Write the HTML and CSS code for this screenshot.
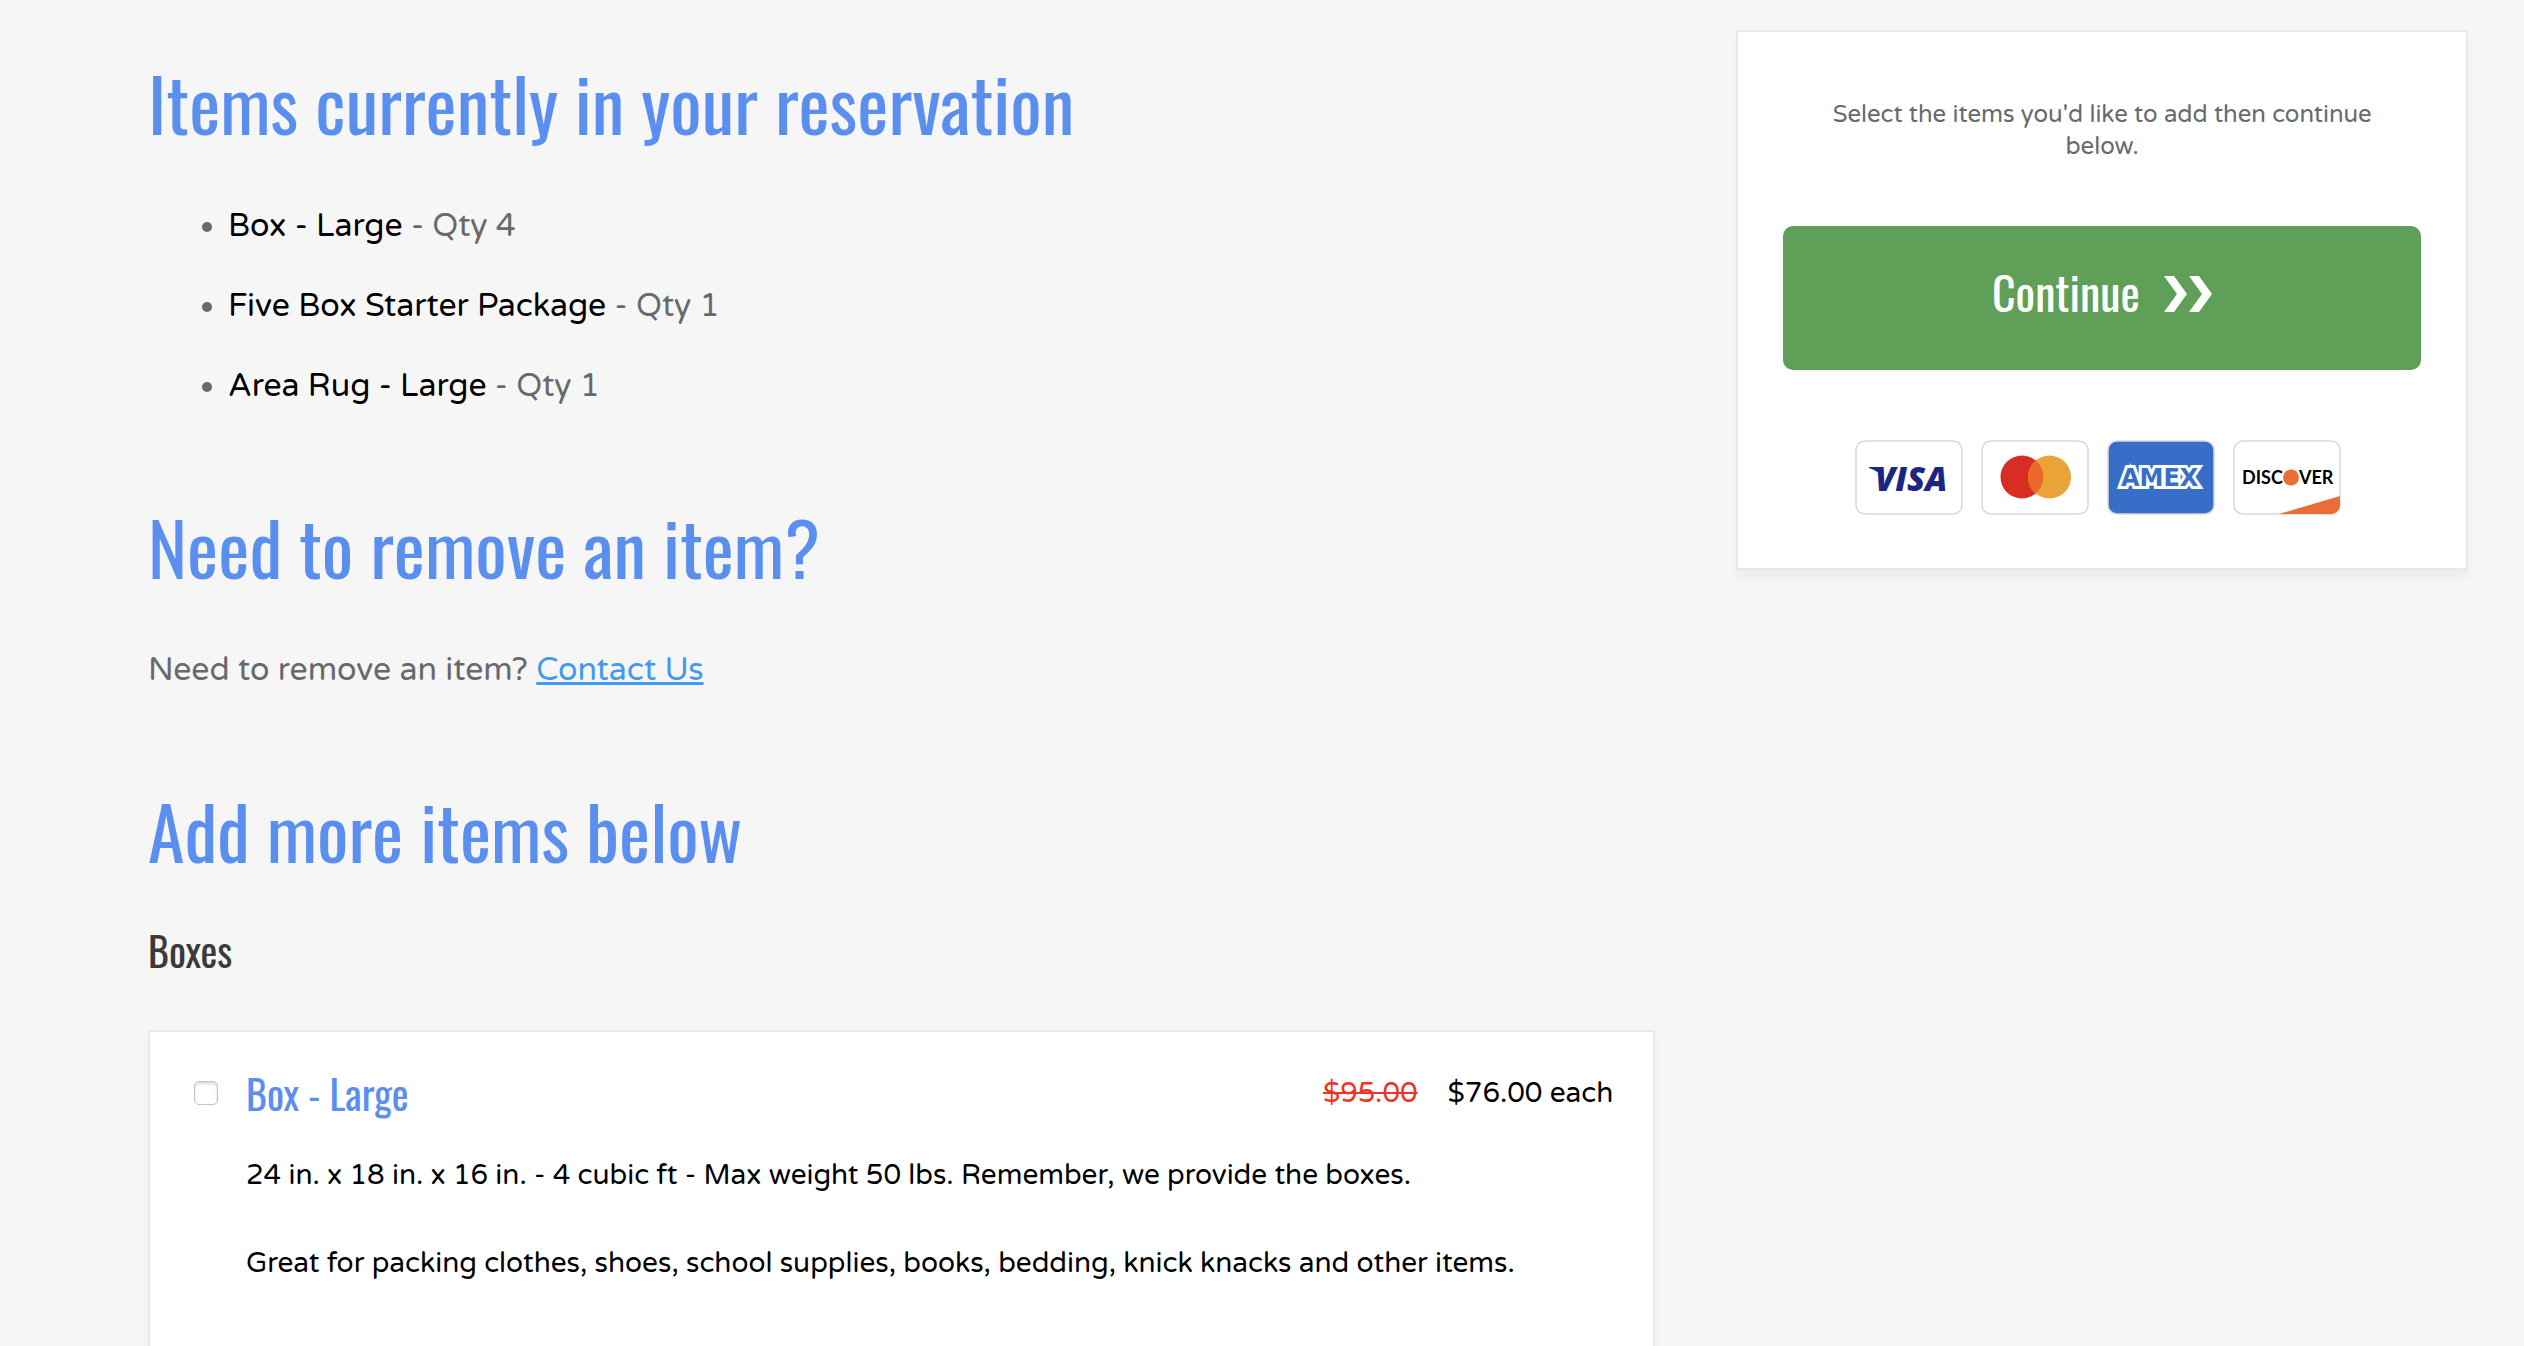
FILE: index.html
```html
<!DOCTYPE html>
<html lang="en">
<head>
    <meta charset="UTF-8">
    <meta name="viewport" content="width=device-width, initial-scale=1.0">
    <title>Your Reservation - Add Items</title>
    <link rel="stylesheet" href="styles.css">
</head>
<body>
    <form class="page">
        <main class="content">
            <h2>Items currently in your reservation</h2>
            <ul class="item-list">
                <li><span class="item-name">Box - Large</span> - Qty 4</li>
                <li><span class="item-name">Five Box Starter Package</span> - Qty 1</li>
                <li><span class="item-name">Area Rug - Large</span> - Qty 1</li>
            </ul>

            <h2>Need to remove an item?</h2>
            <p class="remove-note">Need to remove an item? <a href="#contact">Contact Us</a></p>

            <h2>Add more items below</h2>
            <h3>Boxes</h3>

            <div class="product">
                <div class="product-header">
                    <input type="checkbox" id="box-large" name="items">
                    <label for="box-large">Box - Large</label>
                    <span class="old-price">$95.00</span>
                    <span class="price">$76.00 each</span>
                </div>
                <div class="product-description">
                    <p>24 in. x 18 in. x 16 in. - 4 cubic ft - Max weight 50 lbs. Remember, we provide the boxes.</p>
                    <p>Great for packing clothes, shoes, school supplies, books, bedding, knick knacks and other items.</p>
                </div>
            </div>
        </main>

        <aside class="sidebar">
            <p class="sidebar-text">Select the items you'd like to add then continue below.</p>
            <button type="button" class="continue-button">
                Continue
                <svg class="chevrons" viewBox="0 0 48 36" aria-hidden="true">
                    <path d="M0 0h10l13 18-13 18H0l13-18zM25 0h10l13 18-13 18H25l13-18z" fill="#fff"/>
                </svg>
            </button>
            <div class="cards">
                <!-- Visa -->
                <svg class="card" viewBox="0 0 108 75">
                    <rect x="1" y="1" width="106" height="73" rx="9" fill="#fff" stroke="#d9d9d9" stroke-width="1.5"/>
                    <path d="M14 27h8q4 0 5 4l2 9q-4-9-15-12z" fill="#1a2780"/>
                    <text x="20" y="51" class="visa-text">VISA</text>
                </svg>
                <!-- Mastercard -->
                <svg class="card" viewBox="0 0 108 75">
                    <rect x="1" y="1" width="106" height="73" rx="9" fill="#fff" stroke="#d9d9d9" stroke-width="1.5"/>
                    <circle cx="41" cy="37" r="21.5" fill="#d82d22"/>
                    <circle cx="68.5" cy="37" r="21.5" fill="#eaa338"/>
                    <path d="M54.75 20.5a21.5 21.5 0 0 1 0 33 21.5 21.5 0 0 1 0-33z" fill="#ea682a"/>
                </svg>
                <!-- American Express -->
                <svg class="card" viewBox="0 0 108 75">
                    <rect x="1" y="1" width="106" height="73" rx="9" fill="#376fc8" stroke="#d9d9d9" stroke-width="1.5"/>
                    <text x="14" y="46" class="amex-text">AMEX</text>
                </svg>
                <!-- Discover -->
                <svg class="card" viewBox="0 0 108 75">
                    <rect x="1" y="1" width="106" height="73" rx="9" fill="#fff" stroke="#d9d9d9" stroke-width="1.5"/>
                    <path d="M46 74L107 56v9a9 9 0 0 1-9 9z" fill="#ea6c36"/>
                    <text x="9" y="44" class="discover-text">DISC</text>
                    <circle cx="58" cy="37.5" r="8" fill="#ea6c36"/>
                    <text x="66" y="44" class="discover-text">VER</text>
                </svg>
            </div>
        </aside>
    </form>
</body>
</html>
```
FILE: styles.css
```css
* {
    box-sizing: border-box;
}

body {
    margin: 0;
    background-color: #f6f6f6;
    color: #666a6d;
    font-family: 'Varela Round', 'Noto Sans', sans-serif;
    font-size: 32px;
    line-height: 48px;
}

.page {
    display: grid;
    grid-template-columns: 103fr 50fr;
    gap: 81px;
    align-items: start;
    padding: 30px 56px 0 148px;
}

.content {
    padding-top: 24px;
}

h2,
h3,
.product-header label,
.continue-button {
    font-family: Oswald, 'Roboto Condensed', sans-serif;
    font-weight: 400;
}

h2 {
    margin: 0;
    color: #5a8ff0;
    font-size: 74px;
    line-height: 96px;
}

h3 {
    margin: 48px 0 56px;
    color: #3a3a3a;
    font-size: 40px;
    line-height: 48px;
}

.item-list {
    margin: 52px 0 88px;
    padding-left: 80px;
}

.item-list li {
    margin-bottom: 32px;
}

.item-name {
    color: #000;
}

.remove-note {
    margin: 52px 0 88px;
}

a {
    color: #4398f0;
}

.product {
    padding: 37px 40px 36px;
    border: 2px solid #e8e8e8;
    background-color: #fff;
    color: #000;
    font-size: 28px;
    box-shadow: 0 8px 8px rgba(0, 0, 0, 0.04);
}

.product-header {
    display: flex;
    align-items: center;
}

.product-header input {
    appearance: none;
    width: 24px;
    height: 24px;
    margin: 0 28px 0 4px;
    border: 1px solid #c4c4c4;
    border-radius: 5px;
    box-shadow: inset 0 2px 3px rgba(0, 0, 0, 0.15);
}

.product-header input:checked {
    background-color: #5a8ff0;
}

.product-header label {
    flex: 1;
    color: #5a8ff0;
    font-size: 40px;
}

.old-price {
    margin-right: 30px;
    color: #ee3426;
    text-decoration: line-through;
}

.product-description {
    padding-left: 56px;
}

.product-description p {
    margin: 34px 0 40px;
}

.sidebar {
    padding: 67px 45px 53px;
    border: 2px solid #e8e8e8;
    background-color: #fff;
    box-shadow: 0 8px 8px rgba(0, 0, 0, 0.04);
    text-align: center;
}

.sidebar-text {
    margin: 0 40px 63px;
    font-size: 24px;
    line-height: 32px;
}

.continue-button {
    display: block;
    width: 100%;
    height: 144px;
    padding: 0 0 14px;
    border: none;
    border-radius: 10px;
    background-color: #5f9f58;
    color: #fff;
    font-size: 46px;
    cursor: pointer;
}

.chevrons {
    width: 48px;
    height: 36px;
    margin-left: 14px;
}

.cards {
    display: flex;
    justify-content: center;
    gap: 18px;
    margin-top: 70px;
    padding-right: 8px;
}

.card {
    width: 108px;
    height: 75px;
}

.visa-text {
    font: italic 800 33px 'Open Sans', sans-serif;
    fill: #1a2780;
}

.amex-text {
    font: 700 24px 'DejaVu Sans', sans-serif;
    fill: #376fc8;
    stroke: #fff;
    stroke-width: 6px;
    stroke-linejoin: miter;
    paint-order: stroke;
}

.discover-text {
    font: 700 18px Lato, sans-serif;
    fill: #000;
}
```
